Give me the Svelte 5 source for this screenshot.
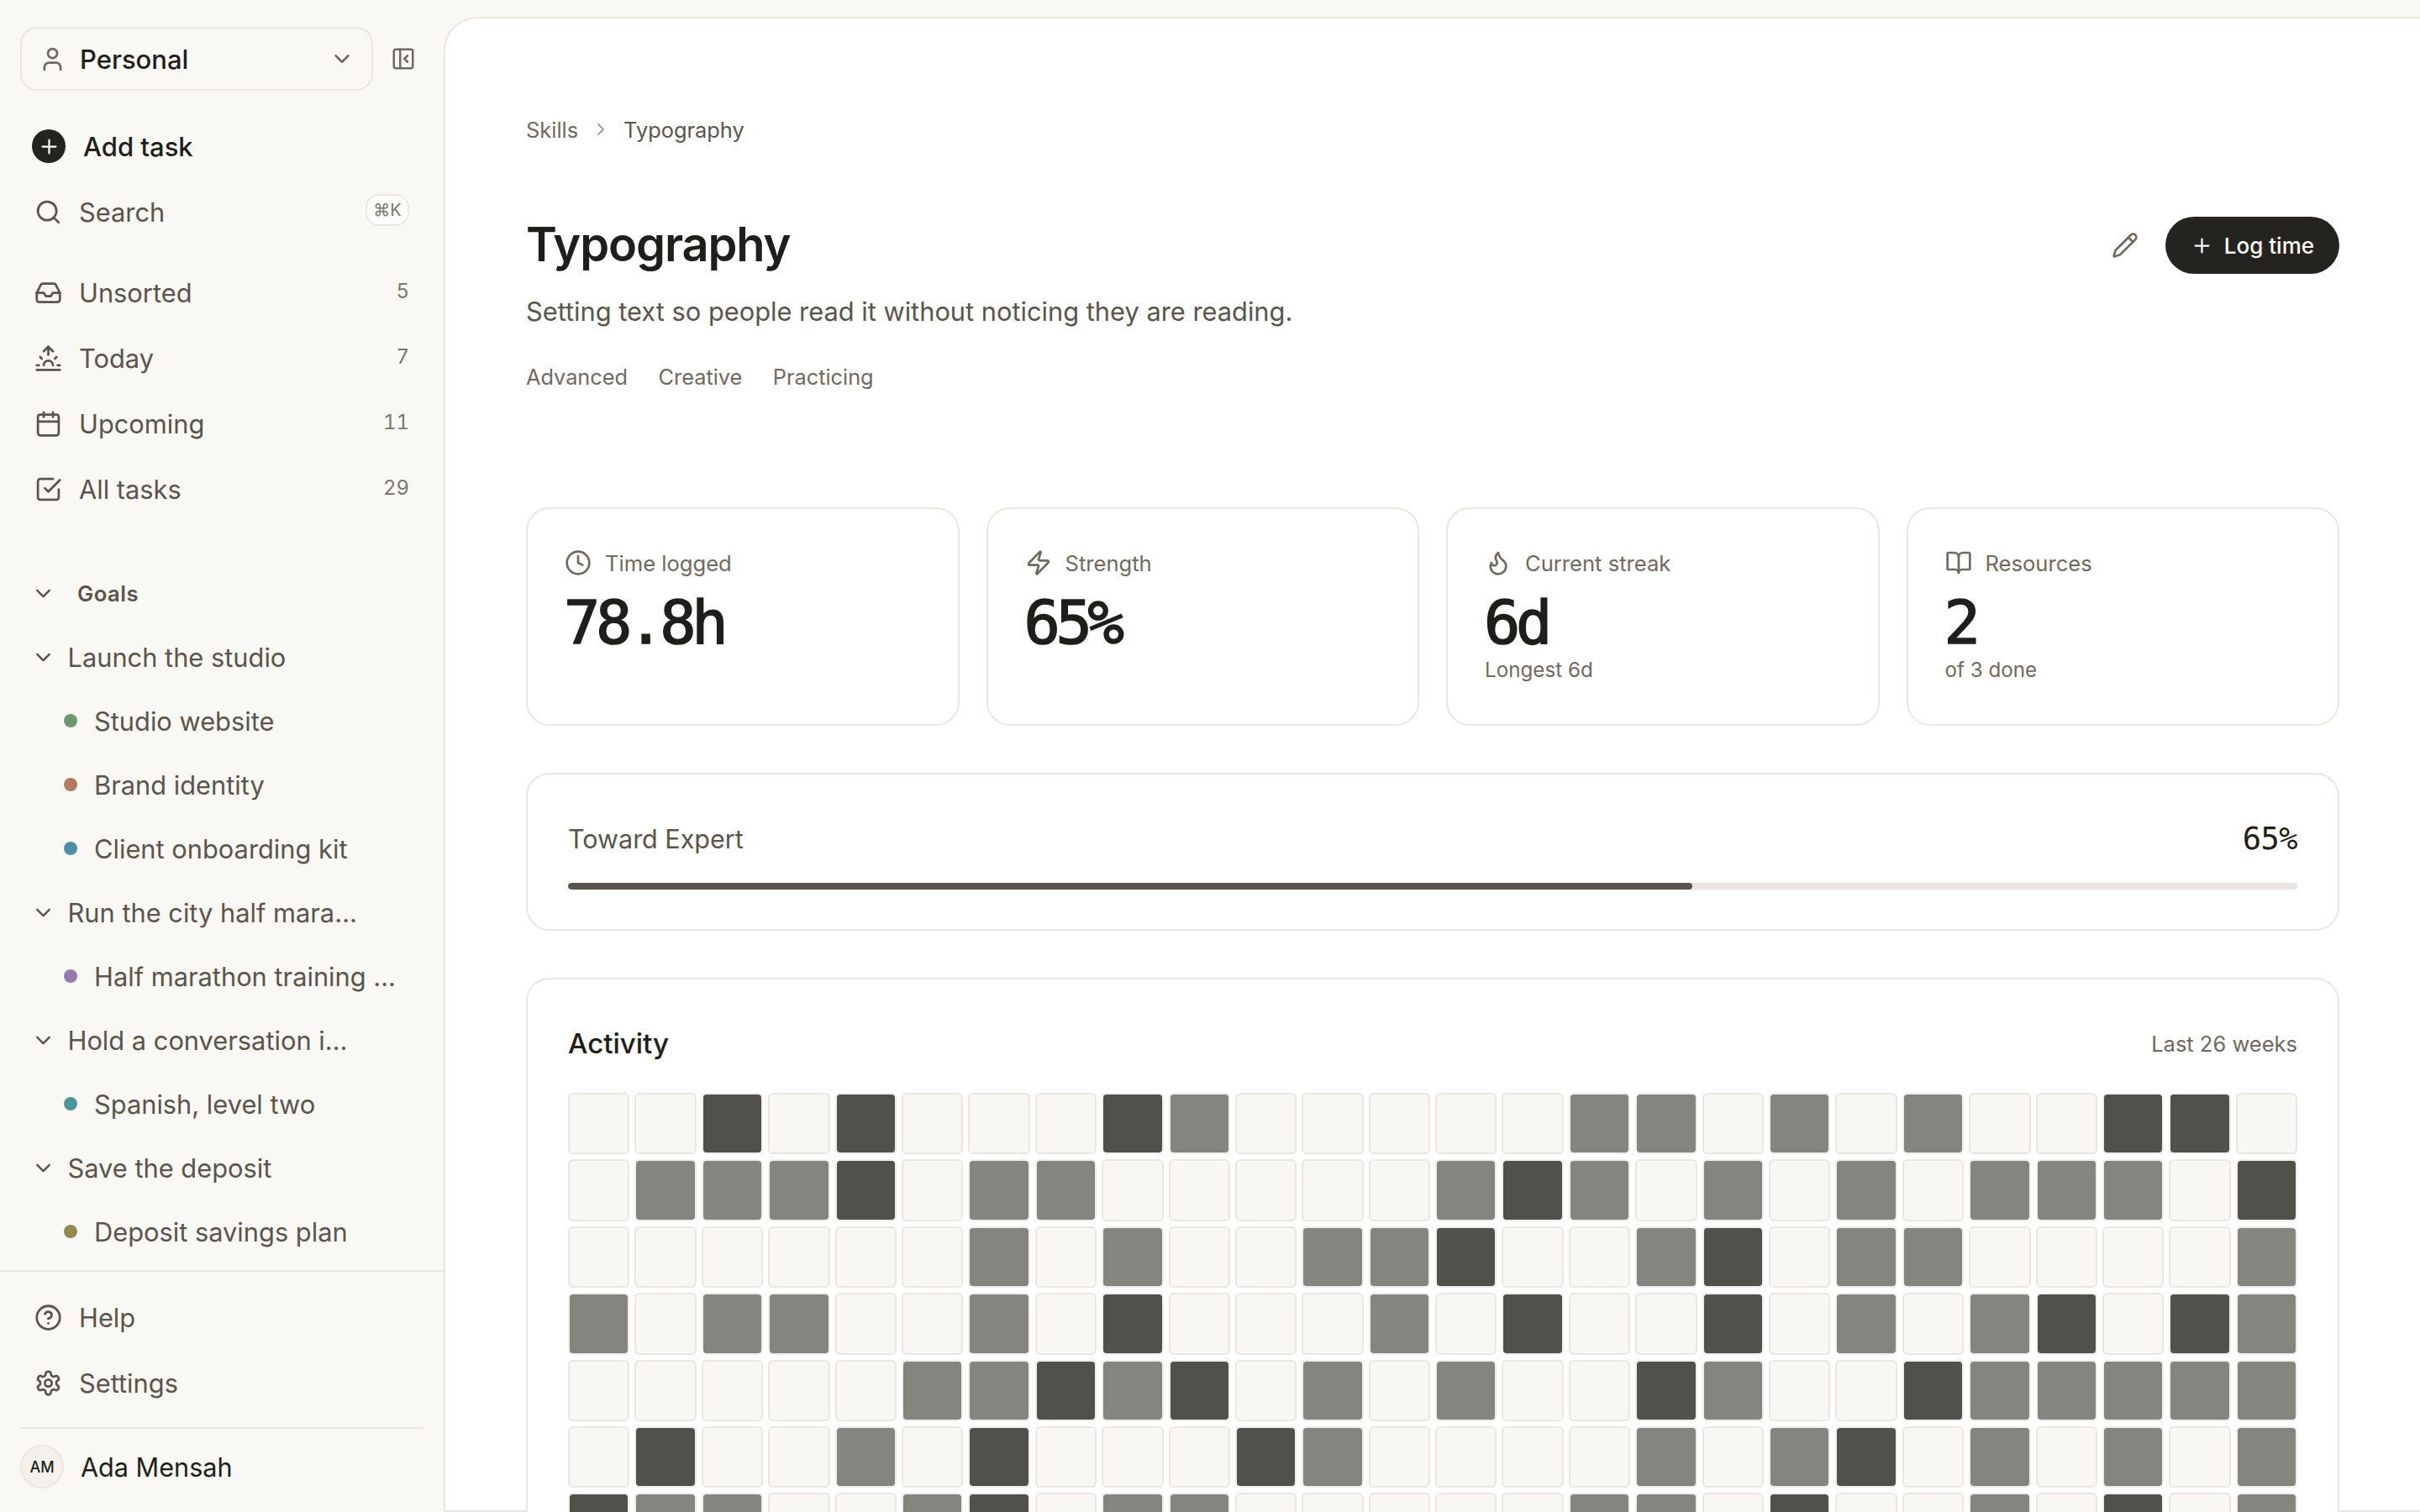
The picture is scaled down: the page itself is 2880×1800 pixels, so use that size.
<script lang="ts">
  type Lvl = 0 | 1 | 2;

  const nav = [
    { label: 'Unsorted', count: 5, icon: 'inbox' },
    { label: 'Today', count: 7, icon: 'sunrise' },
    { label: 'Upcoming', count: 11, icon: 'calendar' },
    { label: 'All tasks', count: 29, icon: 'check' },
  ];

  const goals = [
    { name: 'Launch the studio', items: [
      { name: 'Studio website', color: '#6b9a6e' },
      { name: 'Brand identity', color: '#b27a60' },
      { name: 'Client onboarding kit', color: '#4d8fa8' },
    ] },
    { name: 'Run the city half marathon', items: [
      { name: 'Half marathon training plan', color: '#917bb0' },
    ] },
    { name: 'Hold a conversation in Spanish', items: [
      { name: 'Spanish, level two', color: '#4a959b' },
    ] },
    { name: 'Save the deposit', items: [
      { name: 'Deposit savings plan', color: '#94894f' },
    ] },
  ];

  const stats = [
    { label: 'Time logged', value: '78.8h', sub: '', icon: 'clock' },
    { label: 'Strength', value: '65%', sub: '', icon: 'bolt' },
    { label: 'Current streak', value: '6d', sub: 'Longest 6d', icon: 'flame' },
    { label: 'Resources', value: '2', sub: 'of 3 done', icon: 'book' },
  ];

  // one string per row, 26 weeks: . empty, m mid, d dark
  const rows = [
    '..d.d...dm.....mm.m.m..dd.',
    '.mmmd.mm.....mdm.m.m.mmm.d',
    '......m.m..mmd..md.mm....m',
    'm.mm..m.d...m.d..d.m.md.dm',
    '.....mmdmd.m.m..dm..dmmmmm',
    '.d..m.d...dm....m.md.m.m.m',
    'dmm..md.mm.....mm.d..m.d.m',
  ];

  const cells: Lvl[] = rows.flatMap((r) =>
    [...r].map((c) => (c === 'd' ? 2 : c === 'm' ? 1 : 0) as Lvl)
  );
</script>

{#snippet icon(name: string)}
  <svg class="ico" viewBox="0 0 24 24" fill="none" stroke="currentColor" stroke-width="2" stroke-linecap="round" stroke-linejoin="round" aria-hidden="true">
    {#if name === 'inbox'}
      <path d="M22 12h-6l-2 3h-4l-2-3H2" /><path d="M5.45 5.11 2 12v6a2 2 0 0 0 2 2h16a2 2 0 0 0 2-2v-6l-3.45-6.89A2 2 0 0 0 16.76 4H7.24a2 2 0 0 0-1.79 1.11z" />
    {:else if name === 'sunrise'}
      <path d="M12 2v7" /><path d="m4.93 10.93 1.41 1.41" /><path d="M2 18h2" /><path d="M20 18h2" /><path d="m19.07 10.93-1.41 1.41" /><path d="M22 22H2" /><path d="m8 6 4-4 4 4" /><path d="M16 18a4 4 0 0 0-8 0" />
    {:else if name === 'calendar'}
      <path d="M8 2v4" /><path d="M16 2v4" /><rect x="3" y="4" width="18" height="18" rx="2" /><path d="M3 10h18" />
    {:else if name === 'check'}
      <path d="m9 11 3 3L22 4" /><path d="M21 12v7a2 2 0 0 1-2 2H5a2 2 0 0 1-2-2V5a2 2 0 0 1 2-2h11" />
    {:else if name === 'clock'}
      <circle cx="12" cy="12" r="10" /><path d="M12 6v6l4 2" />
    {:else if name === 'bolt'}
      <path d="M4 14a1 1 0 0 1-.78-1.63l9.9-10.2a.5.5 0 0 1 .86.46l-1.92 6.02A1 1 0 0 0 13 10h7a1 1 0 0 1 .78 1.63l-9.9 10.2a.5.5 0 0 1-.86-.46l1.92-6.02A1 1 0 0 0 11 14z" />
    {:else if name === 'flame'}
      <path d="M8.5 14.5A2.5 2.5 0 0 0 11 12c0-1.38-.5-2-1-3-1.07-2.14-.22-4.05 2-6 .5 2.5 2 4.9 4 6.5 2 1.6 3 3.5 3 5.5a7 7 0 1 1-14 0c0-1.15.43-2.29 1-3a2.5 2.5 0 0 0 2.5 2.5z" />
    {:else if name === 'book'}
      <path d="M12 7v14" /><path d="M3 18a1 1 0 0 1-1-1V4a1 1 0 0 1 1-1h5a4 4 0 0 1 4 4 4 4 0 0 1 4-4h5a1 1 0 0 1 1 1v13a1 1 0 0 1-1 1h-6a3 3 0 0 0-3 3 3 3 0 0 0-3-3z" />
    {:else if name === 'search'}
      <circle cx="11" cy="11" r="8" /><path d="m21 21-4.3-4.3" />
    {:else if name === 'help'}
      <circle cx="12" cy="12" r="10" /><path d="M9.09 9a3 3 0 0 1 5.83 1c0 2-3 3-3 3" /><path d="M12 17h.01" />
    {:else if name === 'settings'}
      <path d="M12.22 2h-.44a2 2 0 0 0-2 2v.18a2 2 0 0 1-1 1.73l-.43.25a2 2 0 0 1-2 0l-.15-.08a2 2 0 0 0-2.73.73l-.22.38a2 2 0 0 0 .73 2.73l.15.1a2 2 0 0 1 1 1.72v.51a2 2 0 0 1-1 1.74l-.15.09a2 2 0 0 0-.73 2.73l.22.38a2 2 0 0 0 2.73.73l.15-.08a2 2 0 0 1 2 0l.43.25a2 2 0 0 1 1 1.73V20a2 2 0 0 0 2 2h.44a2 2 0 0 0 2-2v-.18a2 2 0 0 1 1-1.73l.43-.25a2 2 0 0 1 2 0l.15.08a2 2 0 0 0 2.73-.73l.22-.39a2 2 0 0 0-.73-2.73l-.15-.08a2 2 0 0 1-1-1.74v-.5a2 2 0 0 1 1-1.74l.15-.09a2 2 0 0 0 .73-2.73l-.22-.38a2 2 0 0 0-2.73-.73l-.15.08a2 2 0 0 1-2 0l-.43-.25a2 2 0 0 1-1-1.73V4a2 2 0 0 0-2-2z" /><circle cx="12" cy="12" r="3" />
    {:else if name === 'user'}
      <path d="M19 21v-2a4 4 0 0 0-4-4H9a4 4 0 0 0-4 4v2" /><circle cx="12" cy="7" r="4" />
    {:else if name === 'chevron'}
      <path d="m6 9 6 6 6-6" />
    {:else if name === 'panel'}
      <rect x="3" y="3" width="18" height="18" rx="2" /><path d="M9 3v18" /><path d="m16 15-3-3 3-3" />
    {:else if name === 'plus'}
      <path d="M5 12h14" /><path d="M12 5v14" />
    {:else if name === 'pencil'}
      <path d="M21.17 6.81a1 1 0 0 0-3.99-3.99L3.84 16.17a2 2 0 0 0-.5.83l-1.32 4.35a.5.5 0 0 0 .62.62l4.35-1.32a2 2 0 0 0 .83-.5z" /><path d="m15 5 4 4" />
    {:else if name === 'right'}
      <path d="m9 18 6-6-6-6" />
    {/if}
  </svg>
{/snippet}

<div class="app">
  <aside class="side">
    <div class="top">
      <div class="switch">
        <span class="ic-user">{@render icon('user')}</span>
        <span class="wname">Personal</span>
        <span class="ic-drop">{@render icon('chevron')}</span>
      </div>
      <span class="collapse">{@render icon('panel')}</span>
    </div>

    <div class="add">
      <span class="plus">{@render icon('plus')}</span>
      <span>Add task</span>
    </div>
    <div class="row search">
      <span class="ic-nav">{@render icon('search')}</span>
      <span class="lbl">Search</span>
      <kbd>⌘K</kbd>
    </div>

    <nav class="nav">
      {#each nav as n (n.label)}
        <div class="row">
          <span class="ic-nav">{@render icon(n.icon)}</span>
          <span class="lbl">{n.label}</span>
          <span class="count">{n.count}</span>
        </div>
      {/each}
    </nav>

    <div class="goals-head">
      <span class="ic-chev">{@render icon('chevron')}</span>
      <span>Goals</span>
    </div>
    <div class="goals">
      {#each goals as g (g.name)}
        <div class="goal">
          <span class="ic-chev">{@render icon('chevron')}</span>
          <span class="trunc">{g.name}</span>
        </div>
        {#each g.items as it (it.name)}
          <div class="proj">
            <span class="dot" style="background:{it.color}"></span>
            <span class="trunc">{it.name}</span>
          </div>
        {/each}
      {/each}
    </div>

    <div class="foot">
      <div class="row">
        <span class="ic-nav">{@render icon('help')}</span>
        <span class="lbl">Help</span>
      </div>
      <div class="row">
        <span class="ic-nav">{@render icon('settings')}</span>
        <span class="lbl">Settings</span>
      </div>
      <div class="me">
        <span class="avatar">AM</span>
        <span>Ada Mensah</span>
      </div>
    </div>
  </aside>

  <main class="main">
    <div class="crumbs">
      <span>Skills</span>
      <span class="ic-crumb">{@render icon('right')}</span>
      <span class="here">Typography</span>
    </div>

    <header class="head">
      <div>
        <h1>Typography</h1>
        <p class="desc">Setting text so people read it without noticing they are reading.</p>
        <div class="tags"><span>Advanced</span><span>Creative</span><span>Practicing</span></div>
      </div>
      <div class="actions">
        <span class="pen">{@render icon('pencil')}</span>
        <button class="log"><span class="ic-log">{@render icon('plus')}</span>Log time</button>
      </div>
    </header>

    <section class="stats">
      {#each stats as s (s.label)}
        <div class="card stat">
          <div class="stat-label"><span class="ic-stat">{@render icon(s.icon)}</span>{s.label}</div>
          <div class="stat-val">{s.value}</div>
          {#if s.sub}<div class="stat-sub">{s.sub}</div>{/if}
        </div>
      {/each}
    </section>

    <section class="card prog">
      <div class="prog-head"><span>Toward Expert</span><span class="pct">65%</span></div>
      <div class="track"><div class="fill" style="width:65%"></div></div>
    </section>

    <section class="card activity">
      <div class="act-head"><h2>Activity</h2><span>Last 26 weeks</span></div>
      <div class="grid">
        {#each cells as c, i (i)}
          <div class="cell l{c}"></div>
        {/each}
      </div>
    </section>
  </main>
</div>

<style>
  :global(body) { margin: 0; background: #faf8f5; }
  .app { display: flex; width: 2880px; height: 1800px; overflow: hidden; background: #faf8f5;
         font-family: Inter, "Noto Sans", sans-serif; color: #5a544c; }
  .ico { display: block; width: 100%; height: 100%; }
  .app span[class^="ic-"], .collapse, .pen { display: block; flex-shrink: 0; }

  .side { width: 528px; flex-shrink: 0; display: flex; flex-direction: column; }
  .top { display: flex; align-items: center; gap: 21px; padding: 32px 0 0 24px; }
  .switch { width: 420px; height: 76px; box-sizing: border-box; border: 2px solid #ebe7e0; border-radius: 20px;
            display: flex; align-items: center; gap: 16px; padding: 0 20px 0 20px; }
  .ic-user { width: 33px; height: 33px; color: #6f695f; }
  .wname { color: #1f1e1a; font-size: 31px; font-weight: 500; flex: 1; }
  .ic-drop { width: 30px; height: 30px; color: #6f695f; }
  .collapse { width: 30px; height: 30px; color: #6f695f; }

  .add { display: flex; align-items: center; gap: 21px; margin: 38px 0 0 38px; height: 56px;
         font-size: 31px; font-weight: 500; color: #1f1e1a; }
  .plus { width: 40px; height: 40px; border-radius: 50%; background: #24231f; color: #fff; padding: 6.5px;
          box-sizing: border-box; }
  .row { display: flex; align-items: center; height: 78px; padding: 0 41px 0 41px; gap: 20px;
         font-size: 30.8px; }
  .row .lbl { flex: 1; }
  .ic-nav { width: 33px; height: 33px; }
  .search { margin-top: 11px; }
  kbd { font: 400 20px Inter, "DejaVu Sans", sans-serif; color: #7c766c; border: 2px solid #ebe7e0; border-radius: 16px; background: #fff;
        width: 52px; height: 38px; display: flex; align-items: center; justify-content: center; box-sizing: border-box; margin-top: -4px; }
  .nav { margin-top: 18px; }
  .count { font-size: 24px; color: #7c766c; margin-top: -4px; font-variant-numeric: tabular-nums; }

  .goals-head { display: flex; align-items: center; gap: 26px; margin: 65px 0 0 37px; height: 40px;
                font-size: 25.6px; font-weight: 600; letter-spacing: .5px; }
  .goals { margin-top: 18px; flex: 1; min-height: 0; }
  .goal, .proj { display: flex; align-items: center; height: 76px; font-size: 30.8px; }
  .goal { padding-left: 37px; gap: 14.5px; }
  .ic-chev { width: 29px; height: 29px; }
  .proj { padding-left: 76px; gap: 20px; }
  .trunc { white-space: nowrap; overflow: hidden; text-overflow: ellipsis; min-width: 0; }
  .goal .trunc { width: 345px; }
  .proj .trunc { width: 360px; }
  .dot { width: 16px; height: 16px; border-radius: 50%; flex-shrink: 0; }

  .foot { flex-shrink: 0; border-top: 2px solid #ebe7e0; padding-top: 15px; height: 288px; box-sizing: border-box; }
  .me { display: flex; align-items: center; gap: 20px; margin: 14px 24px 0 24px; padding-top: 19px;
        border-top: 2px solid #ebe7e0; font-size: 30.6px; color: #1f1e1a; }
  .avatar { width: 52px; height: 52px; border-radius: 50%; background: #f4f1ec; border: 2px solid #ebe7e0;
            display: flex; align-items: center; justify-content: center; font-size: 18px; font-weight: 500; box-sizing: border-box; }

  .main { flex: 1; min-width: 0; margin-top: 20px; background: #fff; border: 2px solid #ebe7e0; border-right: 0;
          border-radius: 40px 0 0 0; padding: 112px 96px 0 96px; }
  .crumbs { display: flex; align-items: center; gap: 15px; font-size: 25.4px; color: #6f695f; height: 40px; }
  .ic-crumb { width: 24px; height: 24px; color: #a39d93; }
  .here { color: #5a544c; }

  .head { display: flex; justify-content: space-between; align-items: flex-start; margin-top: 79px; }
  h1 { margin: 0; font-size: 56px; font-weight: 600; letter-spacing: -1.12px; color: #1f1e1a; line-height: 76px; }
  .desc { margin: 20px 0 0; font-size: 30.8px; line-height: 44px; }
  .tags { display: flex; gap: 36.6px; margin-top: 38px; font-size: 25.3px; color: #6f695f; line-height: 36px; }
  .actions { display: flex; align-items: center; gap: 32px; margin-top: 5px; }
  .pen { color: #6f695f; width: 32px; height: 32px; }
  .log { display: flex; align-items: center; gap: 13px; height: 68px; padding: 0 30px 0 30px; border: 0; border-radius: 34px;
         background: #24231f; color: #fff; font: 500 26px Inter, sans-serif; }
  .ic-log { width: 27px; height: 27px; }

  .stats { display: grid; grid-template-columns: repeat(4, 1fr); gap: 32px; margin-top: 137px; }
  .card { border: 2px solid #ebe7e0; border-radius: 28px; box-sizing: border-box; background: #fff; }
  .stat { height: 260px; padding: 46px 44px 0; }
  .stat-label { display: flex; align-items: center; gap: 16px; font-size: 25.6px; color: #6f695f; height: 36px; }
  .ic-stat { width: 32px; height: 32px; }
  .stat-val { font: 400 72px/84px "DejaVu Sans Mono", monospace; letter-spacing: -5.3px; -webkit-text-stroke: 1.6px #1f1e1a;
              color: #1f1e1a; margin: 11px 0 0 -1px; }
  .stat-sub { font-size: 24.2px; color: #6f695f; margin-top: 0; }

  .prog { margin-top: 56px; height: 188px; padding: 55px 48px 0 48px; }
  .prog-head { display: flex; justify-content: space-between; align-items: center; font-size: 30.5px; }
  .pct { font-family: "DejaVu Sans Mono", monospace; color: #1f1e1a; letter-spacing: -.5px; font-size: 37px; }
  .track { height: 8px; background: #e9e5df; border-radius: 4px; margin-top: 31px; overflow: hidden; }
  .fill { height: 100%; background: #5a544c; border-radius: 4px; }

  .activity { margin-top: 56px; padding: 52px 48px 0; height: 900px; }
  .act-head { display: flex; justify-content: space-between; align-items: center; font-size: 25.5px; color: #6f695f; }
  h2 { margin: 0; font-size: 33px; font-weight: 500; color: #1f1e1a; line-height: 48px; }
  .grid { display: grid; grid-template-columns: repeat(26, 1fr); gap: 6px; margin-top: 35px; }
  .cell { aspect-ratio: 1; border: 2px solid #ebe7e0; border-radius: 6px; box-sizing: border-box; background: #f9f7f3; }
  .cell.l1 { background: #86847e; border-color: #f0eeea; }
  .cell.l2 { background: #52504b; border-color: #f0eeea; }
</style>
